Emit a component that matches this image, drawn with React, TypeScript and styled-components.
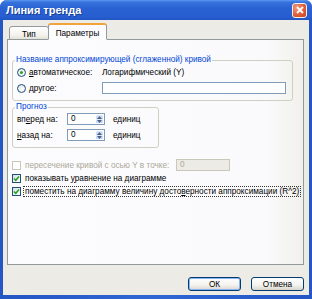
import React from 'react';
import styled, { createGlobalStyle } from 'styled-components';

const GlobalStyle = createGlobalStyle`
  html, body { margin: 0; padding: 0; }
  body {
    width: 312px;
    height: 299px;
    overflow: hidden;
    background: #ffffff;
    font-family: "Liberation Sans", Arial, sans-serif;
  }
`;

const Window = styled.div`
  width: 312px;
  height: 299px;
  display: flex;
  flex-direction: column;
  background: linear-gradient(to right, #2456C4, #2F66D4 50%, #2456C4);
  border-radius: 7px 7px 0 0;
  overflow: hidden;
`;

const TitleBar = styled.div`
  height: 20px;
  flex: none;
  display: flex;
  align-items: center;
  justify-content: space-between;
  padding: 0 5px 0 6px;
  background: linear-gradient(#5C97EE 0%, #3572DD 12%, #2A62D3 40%, #275DCF 85%, #2054C4 100%);
`;

const Title = styled.span`
  color: #ffffff;
  font: bold 11px "Liberation Sans", Arial, sans-serif;
  text-shadow: 1px 1px 0 #1A3F97;
`;

const CloseButton = styled.div`
  width: 13px;
  height: 13px;
  border: 1px solid #F2F2F2;
  border-radius: 3px;
  background: radial-gradient(circle at 30% 30%, #F39A7E, #DC5A35 60%, #C8431F);
  display: flex;
  align-items: center;
  justify-content: center;
`;

const Frame = styled.div`
  flex: 1;
  margin: 0 3px 4px;
  padding: 3px 5px 0 4px;
  background: #ECEBE6;
  display: flex;
  flex-direction: column;
  font-size: 8.2px;
  color: #000;
`;

const TabRow = styled.div`
  height: 16px;
  display: flex;
  align-items: flex-end;
  padding-left: 2px;
`;

const Tab = styled.div<{ $active?: boolean }>`
  position: relative;
  z-index: ${p => (p.$active ? 2 : 1)};
  box-sizing: border-box;
  height: ${p => (p.$active ? '17px' : '14px')};
  margin-bottom: -1px;
  margin-left: ${p => (p.$active ? '-1px' : '0')};
  padding: ${p => (p.$active ? '2px 7px 0 7px' : '2px 12px 0 12px')};
  border: 1px solid #919B9C;
  border-bottom: ${p => (p.$active ? '1px solid #FCFCFE' : '1px solid #919B9C')};
  border-top: ${p => (p.$active ? '2px solid #F2A43A' : '1px solid #919B9C')};
  border-radius: 3px 3px 0 0;
  background: ${p =>
    p.$active ? '#FCFCFE' : 'linear-gradient(#FFFFFF, #F2F1EC 70%, #E3E1D8)'};
  display: flex;
  align-items: center;
`;

const Panel = styled.div`
  box-sizing: border-box;
  height: 226px;
  border: 1px solid #919B9C;
  background: linear-gradient(to right, #FCFCFE 0%, #FAFAFC 88%, #F1F0EB 100%);
  padding: 15px 10px 0 4px;
  display: flex;
  flex-direction: column;
  align-items: flex-start;
`;

const Group = styled.fieldset<{ $width: number }>`
  box-sizing: border-box;
  width: ${p => p.$width}px;
  margin: 0;
  padding: 1px 4px 6px 4px;
  border: 1px solid #D0D0BF;
  border-radius: 3px;
  display: flex;
  flex-direction: column;
  gap: 4px;

  & + & {
    margin-top: 1px;
  }
`;

const Legend = styled.legend`
  padding: 0 1px;
  margin-left: -2px;
  color: #0046D5;
  line-height: 10px;
  font-size: 8.2px;
`;

const Row = styled.div`
  height: 12px;
  display: flex;
  align-items: center;
`;

const OptionLabel = styled.label<{ $width?: number }>`
  display: flex;
  align-items: center;
  gap: 3px;
  width: ${p => (p.$width ? `${p.$width}px` : 'auto')};
  flex: none;
`;

const Radio = styled.span<{ $checked?: boolean }>`
  box-sizing: border-box;
  width: 9px;
  height: 9px;
  border-radius: 50%;
  border: 1px solid #1C5180;
  background: radial-gradient(circle at 60% 60%, #FFFFFF, #DCDCD6);
  display: flex;
  align-items: center;
  justify-content: center;
  flex: none;

  &::after {
    content: '';
    display: ${p => (p.$checked ? 'block' : 'none')};
    width: 3px;
    height: 3px;
    border-radius: 50%;
    background: #2AA02A;
  }
`;

const TextBox = styled.div<{ $width: number; $disabled?: boolean }>`
  box-sizing: border-box;
  width: ${p => p.$width}px;
  height: 12px;
  border: 1px solid ${p => (p.$disabled ? '#C9C7BA' : '#7F9DB9')};
  background: ${p => (p.$disabled ? '#ECEBE6' : '#FFFFFF')};
  color: ${p => (p.$disabled ? '#ACA899' : '#000')};
  padding-left: 3px;
  line-height: 10px;
  flex: none;
`;

const SpinBox = styled.div`
  display: flex;
  flex: none;
  height: 12px;
`;

const SpinInput = styled(TextBox)`
  border-right: none;
`;

const SpinButtons = styled.div`
  box-sizing: border-box;
  width: 10px;
  height: 12px;
  border: 1px solid #7F9DB9;
  border-left: none;
  background: #FFFFFF;
  display: flex;
  flex-direction: column;
  padding: 1px;
`;

const SpinArrow = styled.div`
  flex: 1;
  background: linear-gradient(#E1EBFD, #BDD0F4);
  border-radius: 1px;
  display: flex;
  align-items: center;
  justify-content: center;
`;

const FieldLabel = styled.span`
  width: 50px;
  flex: none;
`;

const Unit = styled.span`
  margin-left: 8px;
`;

const CheckList = styled.div`
  margin-top: 11px;
  display: flex;
  flex-direction: column;
  gap: 1px;
  width: 100%;
`;

const CheckBox = styled.span<{ $disabled?: boolean }>`
  box-sizing: border-box;
  width: 9px;
  height: 9px;
  border: 1px solid ${p => (p.$disabled ? '#CAC8BB' : '#1C5180')};
  background: ${p => (p.$disabled ? '#FFFFFF' : 'linear-gradient(135deg, #DCDCD7, #FFFFFF)')};
  display: flex;
  align-items: center;
  justify-content: center;
  flex: none;
`;

const CheckText = styled.span<{ $disabled?: boolean; $focused?: boolean }>`
  color: ${p => (p.$disabled ? '#ACA899' : '#000')};
  outline: ${p => (p.$focused ? '1px dotted #333' : 'none')};
  padding: 0 1px;
  line-height: 9px;
  white-space: nowrap;
`;

const U = styled.span`
  text-decoration: underline;
`;

const ButtonRow = styled.div`
  display: flex;
  justify-content: flex-end;
  gap: 10px;
  padding-top: 12px;
`;

const Button = styled.div<{ $default?: boolean }>`
  box-sizing: border-box;
  width: 53px;
  height: 14px;
  border: 1px solid #003C74;
  border-radius: 3px;
  background: linear-gradient(#FFFFFF, #F3F2EE 60%, #D8D5CB);
  box-shadow: ${p => (p.$default ? 'inset 0 0 0 1px #8CB4F2' : 'none')};
  display: flex;
  align-items: center;
  justify-content: center;
`;

const Check = () => (
  <svg width="7" height="7" viewBox="0 0 7 7">
    <path d="M1 3.5 L2.8 5.3 L6 1.6" fill="none" stroke="#21A121" strokeWidth="1.5" />
  </svg>
);

const Arrow = ({ up }: { up?: boolean }) => (
  <svg width="5" height="3" viewBox="0 0 5 3">
    <path d={up ? 'M0 3 L2.5 0 L5 3 Z' : 'M0 0 L2.5 3 L5 0 Z'} fill="#4D6185" />
  </svg>
);

const Spinner = ({ value }: { value: string }) => (
  <SpinBox>
    <SpinInput $width={28}>{value}</SpinInput>
    <SpinButtons>
      <SpinArrow><Arrow up /></SpinArrow>
      <SpinArrow><Arrow /></SpinArrow>
    </SpinButtons>
  </SpinBox>
);

export default function App() {
  return (
    <>
      <GlobalStyle />
      <Window>
        <TitleBar>
          <Title>Линия тренда</Title>
          <CloseButton>
            <svg width="8" height="8" viewBox="0 0 8 8">
              <path d="M1 1 L7 7 M7 1 L1 7" stroke="#fff" strokeWidth="1.8" />
            </svg>
          </CloseButton>
        </TitleBar>
        <Frame>
          <TabRow>
            <Tab>Тип</Tab>
            <Tab $active>Параметры</Tab>
          </TabRow>
          <Panel>
            <Group $width={281}>
              <Legend>Название аппроксимирующей (сглаженной) кривой</Legend>
              <Row>
                <OptionLabel $width={85}>
                  <Radio $checked />
                  <span><U>а</U>втоматическое:</span>
                </OptionLabel>
                <span>Логарифмический (Y)</span>
              </Row>
              <Row>
                <OptionLabel $width={85}>
                  <Radio />
                  <span><U>д</U>ругое:</span>
                </OptionLabel>
                <TextBox $width={184} />
              </Row>
            </Group>
            <Group $width={147}>
              <Legend>Прогноз</Legend>
              <Row>
                <FieldLabel>вп<U>е</U>ред на:</FieldLabel>
                <Spinner value="0" />
                <Unit>единиц</Unit>
              </Row>
              <Row>
                <FieldLabel><U>н</U>азад на:</FieldLabel>
                <Spinner value="0" />
                <Unit>единиц</Unit>
              </Row>
            </Group>
            <CheckList>
              <Row>
                <OptionLabel $width={164}>
                  <CheckBox $disabled />
                  <CheckText $disabled>пересечение кривой с осью Y в точке:</CheckText>
                </OptionLabel>
                <TextBox $width={54} $disabled>0</TextBox>
              </Row>
              <Row>
                <OptionLabel>
                  <CheckBox><Check /></CheckBox>
                  <CheckText>показывать <U>у</U>равнение на диаграмме</CheckText>
                </OptionLabel>
              </Row>
              <Row>
                <OptionLabel>
                  <CheckBox><Check /></CheckBox>
                  <CheckText $focused>поместить на диаграмму величину досто<U>в</U>ерности аппроксимации (R^2)</CheckText>
                </OptionLabel>
              </Row>
            </CheckList>
          </Panel>
          <ButtonRow>
            <Button $default>ОК</Button>
            <Button>Отмена</Button>
          </ButtonRow>
        </Frame>
      </Window>
    </>
  );
}
